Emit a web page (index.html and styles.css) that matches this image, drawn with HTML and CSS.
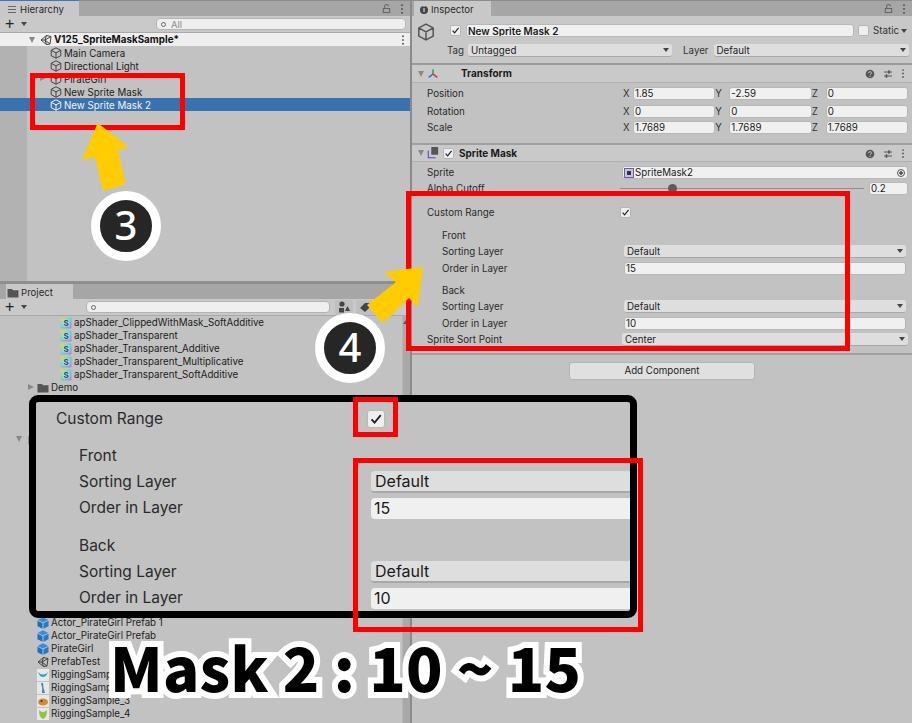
FILE: index.html
```html
<!DOCTYPE html>
<html lang="en">
<head>
<meta charset="utf-8">
<title>Sprite Mask</title>
<link rel="stylesheet" href="styles.css">
</head>
<body>
<svg class="defs" width="0" height="0" aria-hidden="true">
  <defs>
    <symbol id="cube" viewBox="0 0 12 12"><path d="M6 .8 10.8 3.3V8.7L6 11.2 1.2 8.7V3.3ZM1.2 3.3 6 5.9 10.8 3.3M6 5.9V11.2" fill="none" stroke="currentColor" stroke-width="1"/></symbol>
    <symbol id="prefab" viewBox="0 0 12 12"><path d="M6 .3 11.3 3 6 5.6.7 3Z" fill="#2f8fe0"/><path d="M.5 3.7 5.5 6.3V11.8L.5 9.2Z" fill="#1a6fc0"/><path d="M11.5 3.7 6.5 6.3V11.8L11.5 9.2Z" fill="#1f7ad0"/></symbol>
    <symbol id="scene" viewBox="0 0 12 12"><path d="M1 6 6.5 1.5 11 2.5 10 10 6.5 10.5ZM6.5 1.5 5 6 6.5 10.5M1 6H5L10 10M5 6 11 2.5" fill="none" stroke="currentColor" stroke-width="1"/></symbol>
    <symbol id="folder" viewBox="0 0 12 12"><path d="M.5 2H5L6 3.2H11.5V10.5H.5Z" fill="#555"/></symbol>
    <symbol id="shader" viewBox="0 0 12 12"><defs><linearGradient id="sg" x1="0" y1="0" x2="1" y2="1"><stop offset="0" stop-color="#f0d850"/><stop offset=".5" stop-color="#60d8d0"/><stop offset="1" stop-color="#d070d0"/></linearGradient></defs><rect x=".5" y=".5" width="11" height="11" rx="1" fill="url(#sg)"/><rect x="2.5" y="2.5" width="7" height="7" fill="#a8dce8"/><text x="6" y="8.8" text-anchor="middle" font-size="8" font-weight="700" font-family="Inter, sans-serif" fill="#2a4a5a">S</text></symbol>
    <symbol id="dots" viewBox="0 0 4 12"><path d="M2 1.5v1.6M2 5.2v1.6M2 8.9v1.6" stroke="#444" stroke-width="1.6"/></symbol>
    <symbol id="lock" viewBox="0 0 10 12"><path d="M1.5 6H8.5V10.5H1.5ZM3 6V3.5A2 2 0 0 1 7 3.5" fill="none" stroke="#666" stroke-width="1.2"/></symbol>
    <symbol id="check" viewBox="0 0 10 10"><path d="M1.8 5.2 4 7.6 8.4 2.2" fill="none" stroke="#222" stroke-width="1.3"/></symbol>
    <symbol id="help" viewBox="0 0 10 10"><circle cx="5" cy="5" r="4.3" fill="#555"/><path d="M3.6 4a1.4 1.4 0 1 1 2 1.3c-.4.3-.6.5-.6 1" fill="none" stroke="#ccc" stroke-width="1"/><circle cx="5" cy="7.7" r=".6" fill="#ccc"/></symbol>
    <symbol id="sliders" viewBox="0 0 10 10"><path d="M1 3H9M1 7H9" stroke="#555" stroke-width="1"/><path d="M6 1.2V4.8M3.5 5.2V8.8" stroke="#555" stroke-width="1.6"/></symbol>
  </defs>
</svg>

<main class="app">
  <div class="left">
    <section class="hierarchy">
      <div class="tabbar">
        <div class="tab tab-blue"><span class="tab-lines"></span>Hierarchy</div>
        <div class="tab-tools"><svg class="lock"><use href="#lock"/></svg><svg class="dots"><use href="#dots"/></svg></div>
      </div>
      <div class="toolbar">
        <span class="plus">+</span><span class="caret"></span>
        <div class="search search-h"><span class="glass"></span><span class="search-text">All</span></div>
      </div>
      <div class="tree">
        <div class="scene-row"><span class="arrow-down"></span><svg class="ic scene-ic"><use href="#scene"/></svg><b>V125_SpriteMaskSample*</b><svg class="dots dots-right"><use href="#dots"/></svg></div>
        <div class="row r-go"><svg class="ic"><use href="#cube"/></svg>Main Camera</div>
        <div class="row r-go"><svg class="ic"><use href="#cube"/></svg>Directional Light</div>
        <div class="row r-go"><span class="arrow-right"></span><svg class="ic"><use href="#cube"/></svg>PirateGirl</div>
        <div class="row r-go"><svg class="ic"><use href="#cube"/></svg>New Sprite Mask</div>
        <div class="row r-go selected"><svg class="ic"><use href="#cube"/></svg>New Sprite Mask 2</div>
      </div>
    </section>
    <div class="hsep"></div>
    <section class="project">
      <div class="tabbar">
        <div class="tab tab-project"><svg class="ic tab-folder"><use href="#folder"/></svg>Project</div>
      </div>
      <div class="toolbar">
        <span class="plus">+</span><span class="caret"></span>
        <div class="search search-p"><span class="glass"></span></div>
        <div class="tool-btn"><svg width="12" height="12" viewBox="0 0 12 12"><circle cx="4" cy="3" r="2.6" fill="#444"/><rect x="1" y="7" width="5" height="4.5" fill="#444"/><path d="M7 10 9.5 5 12 10Z" fill="#444"/></svg></div>
        <div class="tool-btn tool-tag"><svg width="12" height="12" viewBox="0 0 12 12"><path d="M1 7 6 2H11V6L6 11Z" fill="#444"/></svg><span>10</span></div>
      </div>
      <div class="assets">
        <div class="list">
          <div class="row r-sh"><svg class="ic"><use href="#shader"/></svg>apShader_ClippedWithMask_SoftAdditive</div>
          <div class="row r-sh"><svg class="ic"><use href="#shader"/></svg>apShader_Transparent</div>
          <div class="row r-sh"><svg class="ic"><use href="#shader"/></svg>apShader_Transparent_Additive</div>
          <div class="row r-sh"><svg class="ic"><use href="#shader"/></svg>apShader_Transparent_Multiplicative</div>
          <div class="row r-sh"><svg class="ic"><use href="#shader"/></svg>apShader_Transparent_SoftAdditive</div>
          <div class="row r-fo"><span class="arrow-right"></span><svg class="ic"><use href="#folder"/></svg>Demo</div>
          <div class="row r-fo"><svg class="ic"><use href="#folder"/></svg></div>
          <div class="row r-fo"><svg class="ic"><use href="#folder"/></svg></div>
          <div class="hidden-rows"></div>
          <div class="row r-fo r-open"><span class="arrow-down"></span><svg class="ic"><use href="#folder"/></svg></div>
          <div class="hidden-rows-2"></div>
          <div class="row r-fo"><svg class="ic"><use href="#prefab"/></svg>Actor_PirateGirl Prefab 1</div>
          <div class="row r-fo"><svg class="ic"><use href="#prefab"/></svg>Actor_PirateGirl Prefab</div>
          <div class="row r-fo"><svg class="ic"><use href="#prefab"/></svg>PirateGirl</div>
          <div class="row r-fo"><svg class="ic"><use href="#scene"/></svg>PrefabTest</div>
          <div class="row r-fo"><svg class="ic" viewBox="0 0 12 12"><rect width="12" height="12" fill="#e8e8e8"/><path d="M1 3Q6 8 11 3L9 7Q6 9 3 7Z" fill="#2aa8c8"/></svg>RiggingSample_1</div>
          <div class="row r-fo"><svg class="ic" viewBox="0 0 12 12"><rect width="12" height="12" fill="#e8e8e8"/><path d="M4 1Q6 6 5 11H8Q6 6 6 1Z" fill="#2a90b0"/></svg>RiggingSample_2</div>
          <div class="row r-fo"><svg class="ic" viewBox="0 0 12 12"><rect width="12" height="12" fill="#e8e8e8"/><ellipse cx="6" cy="7" rx="5" ry="3.6" fill="#d88a30"/><circle cx="4.5" cy="6" r="1" fill="#333"/></svg>RiggingSample_3</div>
          <div class="row r-fo"><svg class="ic" viewBox="0 0 12 12"><rect width="12" height="12" fill="#e8e8e8"/><path d="M2 2Q6 6 10 2Q10 10 6 11Q2 10 2 2Z" fill="#8cc840"/></svg>RiggingSample_4</div>
        </div>
        <div class="scrollbar"><span class="scroll-up"></span></div>
      </div>
    </section>
  </div>

  <div class="vsep"></div>

  <section class="inspector">
    <div class="tabbar">
      <div class="tab tab-inspector"><span class="info">i</span>Inspector</div>
      <div class="tab-tools"><svg class="lock"><use href="#lock"/></svg><svg class="dots"><use href="#dots"/></svg></div>
    </div>
    <div class="go-head">
      <div class="go-row go-name">
        <svg class="go-icon"><use href="#cube"/></svg>
        <span class="cb"><svg><use href="#check"/></svg></span>
        <div class="field name-field">New Sprite Mask 2</div>
        <span class="cb cb-static"></span><span class="static">Static</span><span class="caret caret-static"></span>
      </div>
      <div class="go-row go-tag">
        <span class="tag-label">Tag</span>
        <div class="drop tag-drop">Untagged<span class="caret"></span></div>
        <span class="layer-label">Layer</span>
        <div class="drop layer-drop">Default<span class="caret"></span></div>
      </div>
    </div>

    <div class="comp-head comp-transform">
      <span class="arrow-down"></span>
      <svg class="comp-ic" viewBox="0 0 14 14"><path d="M7 7V1.5" stroke="#3aa040" stroke-width="1.8"/><path d="M7 7 2 11" stroke="#2a6fd0" stroke-width="1.8"/><path d="M7 7 12 11" stroke="#d03030" stroke-width="1.8"/></svg>
      <span class="comp-title comp-title-t">Transform</span>
      <span class="comp-tools"><svg><use href="#help"/></svg><svg><use href="#sliders"/></svg><svg class="dots"><use href="#dots"/></svg></span>
    </div>
    <div class="props">
      <div class="prop"><span class="plabel">Position</span><div class="xyz"><span>X</span><div class="field">1.85</div><span>Y</span><div class="field">-2.59</div><span>Z</span><div class="field">0</div></div></div>
      <div class="prop mt-5"><span class="plabel">Rotation</span><div class="xyz"><span>X</span><div class="field">0</div><span>Y</span><div class="field">0</div><span>Z</span><div class="field">0</div></div></div>
      <div class="prop mt-3"><span class="plabel">Scale</span><div class="xyz"><span>X</span><div class="field">1.7689</div><span>Y</span><div class="field">1.7689</div><span>Z</span><div class="field">1.7689</div></div></div>
    </div>

    <div class="comp-head comp-mask">
      <span class="arrow-down"></span>
      <svg class="comp-ic" viewBox="0 0 14 14"><rect x="5" y="0" width="8" height="9" fill="#555"/><path d="M1.5 4V12.5H10" fill="none" stroke="#6a3fd0" stroke-width="1.3"/></svg>
      <span class="cb cb-comp"><svg><use href="#check"/></svg></span>
      <span class="comp-title">Sprite Mask</span>
      <span class="comp-tools"><svg><use href="#help"/></svg><svg><use href="#sliders"/></svg><svg class="dots"><use href="#dots"/></svg></span>
    </div>
    <div class="props">
      <div class="prop"><span class="plabel">Sprite</span><div class="field sprite-field"><svg class="sprite-ic" viewBox="0 0 10 10"><rect x=".5" y=".5" width="9" height="9" fill="#c8c4e0" stroke="#6a5ab0"/><rect x="3" y="3" width="4" height="4" fill="#333"/></svg>SpriteMask2<span class="picker"></span></div></div>
      <div class="prop mt-3"><span class="plabel">Alpha Cutoff</span><div class="slider"><div class="track"><span class="thumb"></span></div><div class="field slider-val">0.2</div></div></div>
      <div class="prop mt-11"><span class="plabel">Custom Range</span><span class="cb cb-range"><svg><use href="#check"/></svg></span></div>
      <div class="prop nested mt-10"><span class="plabel">Front</span></div>
      <div class="prop nested mt-3"><span class="plabel">Sorting Layer</span><div class="drop grow">Default<span class="caret"></span></div></div>
      <div class="prop nested mt-4"><span class="plabel">Order in Layer</span><div class="field grow">15</div></div>
      <div class="prop nested mt-9"><span class="plabel">Back</span></div>
      <div class="prop nested mt-3"><span class="plabel">Sorting Layer</span><div class="drop grow">Default<span class="caret"></span></div></div>
      <div class="prop nested mt-4"><span class="plabel">Order in Layer</span><div class="field grow">10</div></div>
      <div class="prop mt-3"><span class="plabel">Sprite Sort Point</span><div class="drop grow">Center<span class="caret"></span></div></div>
    </div>
    <div class="add-wrap"><div class="add-btn">Add Component</div></div>
  </section>
</main>

<!-- annotations lying over the screenshot -->
<div class="red red-hier"></div>
<div class="red red-insp"></div>
<svg class="arrows" width="912" height="723" viewBox="0 0 912 723" aria-hidden="true">
  <path d="M97.7 123 129 147.3 118 150 125.7 184 103 191 95 157 82 160Z" fill="#ffcc00"/>
  <path d="M423 267 384 272 396 282 367 305 383 323 409 298 418 307Z" fill="#ffcc00"/>
</svg>
<div class="badge badge-3">3</div>
<div class="badge badge-4">4</div>

<div class="zoom-card">
  <div class="zrow"><span class="zlabel z-top">Custom Range</span><span class="zcb"><svg><use href="#check"/></svg></span></div>
  <div class="zrow z-front"><span class="zlabel">Front</span></div>
  <div class="zrow z-sort"><span class="zlabel">Sorting Layer</span><div class="zdrop">Default</div></div>
  <div class="zrow z-order"><span class="zlabel">Order in Layer</span><div class="zfield">15</div></div>
  <div class="zrow z-back"><span class="zlabel">Back</span></div>
  <div class="zrow z-sort"><span class="zlabel">Sorting Layer</span><div class="zdrop">Default</div></div>
  <div class="zrow z-order"><span class="zlabel">Order in Layer</span><div class="zfield">10</div></div>
</div>
<div class="red red-check"></div>
<div class="red red-fields"></div>

<div class="headline">Mask 2 : 10 ~ 15</div>
</body>
</html>
```

FILE: styles.css
```css
* { box-sizing: border-box; }
html, body { margin: 0; padding: 0; }
body {
  width: 912px; height: 723px; overflow: hidden; position: relative;
  background: #c2c2c2; color: #1c1c1c;
  font: 9.75px/13px Inter, "Liberation Sans", sans-serif;
}
.defs { position: absolute; }
.app { display: grid; grid-template-columns: 410px 2px 500px; height: 723px; }
.left { display: flex; flex-direction: column; height: 723px; overflow: hidden; }
.hierarchy { height: 281px; display: flex; flex-direction: column; }
.hsep { height: 2px; background: #8f8f8f; }
.vsep { background: #8a8a8a; }
.project { flex: 1; display: flex; flex-direction: column; min-height: 0; }

.tabbar { height: 16px; flex: none; background: #a6a6a6; display: flex; justify-content: space-between; border-top: 1px solid #8c8c8c; }
.tab { height: 15px; background: #c8c8c8; display: flex; align-items: center; font-size: 9.6px; color: #2a2a2a; padding-top: 2px; }
.tab-blue { width: 79px; padding-left: 8px; border-top: 1px solid #3a78c0; margin-top: -1px; height: 16px; }
.tab-lines { width: 8px; height: 7px; margin-right: 4px; background: repeating-linear-gradient(#666 0 1px, transparent 1px 3px); }
.tab-project { width: 67px; margin-left: 6px; padding-left: 1px; }
.tab-folder { width: 12px; height: 12px; margin-right: 3px; }
.tab-inspector { width: 77px; margin-left: 2px; padding-left: 6px; }
.info { width: 8px; height: 8px; border-radius: 50%; background: #444; color: #ddd; font: 700 7px/8px Inter, sans-serif; text-align: center; margin-right: 3px; }
.tab-tools { display: flex; align-items: center; gap: 9px; padding-right: 6px; }
.lock { width: 9px; height: 11px; }
.dots { width: 4px; height: 12px; }

.toolbar { height: 17px; flex: none; background: #c9c9c9; display: flex; align-items: center; border-bottom: 1px solid #a9a9a9; }
.plus { font: 400 16px/16px "Liberation Sans", sans-serif; color: #222; width: 12px; margin-left: 5px; }
.caret { display: inline-block; width: 0; height: 0; border: 3px solid transparent; border-top: 4px solid #444; border-bottom: 0; }
.toolbar .caret { margin-left: 4px; }
.search { height: 12px; background: #efefef; border: 1px solid #b4b4b4; border-radius: 4px; display: flex; align-items: center; padding-left: 4px; }
.search-h { width: 250px; margin-left: 129px; }
.search-p { width: 244px; margin-left: 59px; }
.glass { width: 5px; height: 5px; border: 1px solid #666; border-radius: 50%; }
.search-text { margin-left: 5px; color: #8a8a8a; font-size: 9.5px; }
.tool-btn { height: 15px; background: #bfbfbf; border-radius: 2px; display: flex; align-items: center; justify-content: center; width: 18px; margin-left: 5px; }
.tool-tag { width: 38px; margin-left: 3px; gap: 2px; justify-content: flex-start; padding-left: 3px; }

.tree { flex: 1; background: linear-gradient(90deg, #b2b2b2 0 27px, #c2c2c2 27px); }
.scene-row { height: 13px; background: #efefef; display: flex; align-items: center; padding-left: 29px; position: relative; font-size: 9.85px; color: #111; }
.scene-row b { font-weight: 700; }
.scene-ic { margin-left: 5px; color: #333; margin-right: 3px; }
.dots-right { position: absolute; right: 5px; top: 1px; }
.arrow-down { flex: none; width: 0; height: 0; border: 3.5px solid transparent; border-top: 6px solid #888; border-bottom: 0; }
.arrow-right { flex: none; width: 0; height: 0; border: 3.5px solid transparent; border-left: 6px solid #888; border-right: 0; }

.row { height: 13px; display: flex; align-items: center; white-space: nowrap; position: relative; color: #1c1c1c; }
.ic { width: 12px; height: 12px; flex: none; margin-right: 2px; color: #444; }
.r-go { padding-left: 50px; padding-top: 1px; }
.r-go .arrow-right { position: absolute; left: 40px; top: 3px; }
.r-fo { padding-left: 37px; }
.r-fo .arrow-right { position: absolute; left: 28px; top: 3px; }
.r-fo .arrow-down { position: absolute; left: 16px; top: 3px; }
.r-sh { padding-left: 60px; }
.r-open { padding-left: 28px; }
.selected { background: #3a72b0; color: #f4f4f4; }
.selected .ic { color: #eef4fb; }

.assets { flex: 1; display: flex; min-height: 0; }
.list { width: 402px; overflow: hidden; }
.scrollbar { width: 8px; background: #a9a9a9; border-left: 1px solid #b6b6b6; position: relative; }
.scroll-up { position: absolute; left: 0; top: 4px; width: 0; height: 0; border: 3px solid transparent; border-bottom: 4px solid #555; border-top: 0; }
.hidden-rows { height: 13px; }
.hidden-rows-2 { height: 170px; }

.inspector { display: flex; flex-direction: column; height: 723px; overflow: hidden; }
.go-head { height: 49px; background: #c8c8c8; padding-top: 8px; border-bottom: 2px solid #9a9a9a; }
.go-row { display: flex; align-items: center; height: 13px; position: relative; }
.go-name { padding-left: 38px; }
.go-tag { margin-top: 7px; padding-left: 25px; }
.go-icon { position: absolute; left: 5px; top: -1px; width: 18px; height: 18px; color: #555; }
.cb { width: 11px; height: 11px; background: #efefef; border: 1px solid #b5b5b5; border-radius: 2px; display: flex; flex: none; align-items: center; justify-content: center; }
.cb svg { width: 9px; height: 9px; }
.field { height: 13px; background: #f0f0f0; border: 1px solid #b8b8b8; border-radius: 3px; padding: 0 1px; display: flex; align-items: center; white-space: nowrap; color: #1a1a1a; overflow: hidden; }
.name-field { width: 388px; margin-left: 5px; font-weight: 600; font-size: 10px; padding-top: 1px; }
.cb-static { margin-left: 4px; }
.static { margin-left: 4px; color: #333; }
.caret-static { margin-left: 2px; }
.tag-label, .layer-label { color: #333; }
.tag-label { margin-left: 10px; }
.drop { height: 13px; background: #dedede; border-bottom: 1px solid #a8a8a8; border-radius: 3px; padding: 0 3px; display: flex; align-items: center; justify-content: space-between; color: #222; }
.tag-drop { width: 204px; margin-left: 4px; }
.layer-label { margin-left: 11px; }
.layer-drop { width: 195px; margin-left: 5px; }

.comp-head { height: 17px; background: #c9c9c9; border-bottom: 1px solid #b0b0b0; display: flex; align-items: center; padding-left: 6px; position: relative; }
.comp-transform { height: 18px; }
.comp-ic { width: 12px; height: 12px; margin-left: 3px; flex: none; }
.comp-title { font-weight: 700; font-size: 10px; margin-left: 5px; color: #1a1a1a; }
.comp-title-t { margin-left: 22px; }
.comp-tools { position: absolute; right: 7px; top: 3px; display: flex; gap: 8px; align-items: center; }
.comp-tools svg { width: 10px; height: 10px; }
.comp-tools .dots { width: 4px; height: 11px; }
.cb-comp { margin-left: 4px; }
.comp-mask { border-top: 2px solid #a0a0a0; height: 19px; margin-top: 9px; }
.props { padding-top: 4px; }
.prop { display: flex; align-items: center; height: 13px; padding: 0 4px 0 15px; white-space: nowrap; }
.plabel { width: 195px; flex: none; color: #2a2a2a; }
.nested { padding: 0 6px 0 30px; }
.nested .plabel { width: 182px; }
.grow { flex: 1; }
.mt-3 { margin-top: 3px; } .mt-4 { margin-top: 4px; } .mt-5 { margin-top: 5px; } .mt-9 { margin-top: 9px; } .mt-10 { margin-top: 10px; } .mt-11 { margin-top: 11px; }
.xyz { flex: 1; display: grid; grid-template-columns: 10px 1fr 14px 1fr 14px 1fr; align-items: center; column-gap: 0; margin-left: 1px; color: #333; }
.sprite-field { flex: 1; position: relative; padding-left: 1px; }
.sprite-ic { width: 10px; height: 10px; margin-right: 1px; }
.picker { position: absolute; right: 2px; top: 2px; width: 8px; height: 8px; border: 1px solid #555; border-radius: 50%; background: radial-gradient(circle, #555 0 1.5px, transparent 2px); }
.slider { flex: 1; display: flex; align-items: center; margin-left: -2px; }
.track { width: 244px; height: 1px; background: #8f8f8f; position: relative; }
.thumb { position: absolute; left: 48px; top: -4px; width: 9px; height: 9px; background: #5c5c5c; border-radius: 50%; }
.slider-val { width: 39px; margin-left: 5px; }
.cb-range { margin-left: -2px; }
.add-wrap { border-top: 2px solid #a0a0a0; margin-top: 7px; padding: 7px 0 0 157px; }
.add-btn { width: 186px; height: 18px; background: #e0e0e0; border: 1px solid #b5b5b5; border-radius: 3px; text-align: center; line-height: 16px; color: #222; }

/* annotations */
.red { position: absolute; border: 5px solid #ff0000; }
.red-hier { left: 30px; top: 73px; width: 155px; height: 57px; }
.red-insp { left: 406px; top: 191px; width: 444px; height: 160px; }
.red-check { left: 353px; top: 397px; width: 45px; height: 40px; }
.red-fields { left: 353px; top: 458px; width: 290px; height: 174px; }
.arrows { position: absolute; left: 0; top: 0; pointer-events: none; }
.badge { position: absolute; width: 70px; height: 70px; border-radius: 50%; background: #262626; border: 9px solid #fff; color: #fff; font: 500 40px/50px "Noto Sans", sans-serif; text-align: center; }
.badge-3 { left: 91px; top: 191px; }
.badge-4 { left: 315px; top: 313px; }

.zoom-card { position: absolute; left: 29px; top: 395px; width: 608px; height: 223px; background: #c2c2c2; border: 7px solid #000; border-radius: 9px; overflow: hidden; font-size: 15.5px; line-height: 24px; color: #2a2a2a; padding-top: 6px; }
.zrow { display: flex; align-items: center; height: 22px; padding-left: 43px; }
.zlabel { width: 292px; flex: none; }
.z-top { margin-left: -23px; width: 311px; }
.zcb { width: 18px; height: 18px; background: #efefef; border: 1px solid #b8b8b8; border-radius: 3px; display: flex; align-items: center; justify-content: center; }
.zcb svg { width: 14px; height: 14px; }
.z-front { margin-top: 15px; }
.z-back { margin-top: 16px; }
.z-sort { margin-top: 4px; }
.z-order { margin-top: 4px; }
.zdrop { flex: 1; height: 22px; background: #dedede; border-bottom: 2px solid #a8a8a8; border-radius: 4px 0 0 4px; padding-left: 4px; color: #1a1a1a; font-size: 16px; line-height: 20px; }
.zfield { flex: 1; height: 21px; background: #f0f0f0; border-radius: 4px 0 0 4px; padding-left: 3px; color: #1a1a1a; font-size: 16px; line-height: 21px; }

.headline { position: absolute; left: 110px; top: 622px; white-space: nowrap; font: 900 60px/88px "Noto Sans CJK KR", sans-serif; letter-spacing: .3px; color: #000; -webkit-text-stroke: 12px #fff; paint-order: stroke fill; }
```
